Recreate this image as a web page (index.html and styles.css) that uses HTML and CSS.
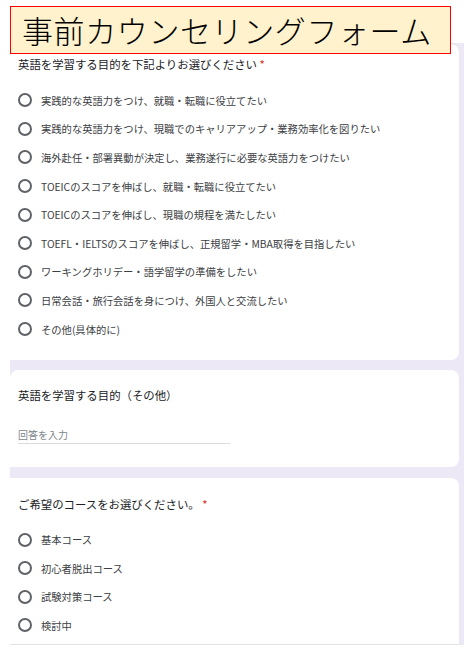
FILE: index.html
```html
<!DOCTYPE html>
<html lang="ja">
<head>
<meta charset="utf-8">
<title>事前カウンセリングフォーム</title>
<link rel="stylesheet" href="styles.css">
</head>
<body>
<div class="page">
  <h1 class="banner">事前カウンセリングフォーム</h1>
  <div class="bg">
    <section class="card card1">
      <div class="q">英語を学習する目的を下記よりお選びください <span class="req">*</span></div>
      <ul class="opts">
        <li><span class="radio"></span>実践的な英語力をつけ、就職・転職に役立てたい</li>
        <li><span class="radio"></span>実践的な英語力をつけ、現職でのキャリアアップ・業務効率化を図りたい</li>
        <li><span class="radio"></span>海外赴任・部署異動が決定し、業務遂行に必要な英語力をつけたい</li>
        <li><span class="radio"></span>TOEICのスコアを伸ばし、就職・転職に役立てたい</li>
        <li><span class="radio"></span>TOEICのスコアを伸ばし、現職の規程を満たしたい</li>
        <li><span class="radio"></span>TOEFL・IELTSのスコアを伸ばし、正規留学・MBA取得を目指したい</li>
        <li><span class="radio"></span>ワーキングホリデー・語学留学の準備をしたい</li>
        <li><span class="radio"></span>日常会話・旅行会話を身につけ、外国人と交流したい</li>
        <li><span class="radio"></span>その他(具体的に)</li>
      </ul>
    </section>
    <section class="card card2">
      <div class="q">英語を学習する目的（その他）</div>
      <div class="field">回答を入力</div>
    </section>
    <section class="card card3">
      <div class="q">ご希望のコースをお選びください。 <span class="req">*</span></div>
      <ul class="opts opts3">
        <li><span class="radio"></span>基本コース</li>
        <li><span class="radio"></span>初心者脱出コース</li>
        <li><span class="radio"></span>試験対策コース</li>
        <li><span class="radio"></span>検討中</li>
      </ul>
    </section>
  </div>
</div>
</body>
</html>
```

FILE: styles.css
```css
html, body {
  margin: 0;
  padding: 0;
  background: #ffffff;
}
body {
  font-family: "Noto Sans CJK JP", "Noto Sans", sans-serif;
  color: #202124;
}
.page {
  position: relative;
  padding: 43px 0 0 10px;
  height: 622px;
}
.banner {
  position: absolute;
  left: 10px;
  top: 6px;
  height: 46px;
  margin: 0;
  box-sizing: content-box;
  border: 1px solid #ff0000;
  background: #fff2cc;
  font-family: "Noto Sans CJK JP", sans-serif;
  font-weight: 200;
  font-size: 31px;
  line-height: 46px;
  letter-spacing: 0.6px;
  padding: 0 0 0 11px;
  width: 428px;
  color: #000;
  z-index: 2;
}
.bg {
  background: #ece8f6;
  width: 454px;
  height: 602px;
  display: flex;
  flex-direction: column;
  gap: 10px;
}
.card {
  background: #ffffff;
  width: 449px;
  box-sizing: border-box;
  border-radius: 0 8px 8px 0;
  padding-left: 8px;
}
.card1 {
  height: 318px;
  padding-top: 12px;
  border-top: 1px solid #dadce0;
}
.card2 {
  height: 97px;
  padding-top: 17px;
  border-radius: 8px 8px 8px 0;
}
.card3 {
  height: 167px;
  padding-top: 18px;
  margin-top: 1px;
  border-radius: 0 8px 0 0;
  border-bottom: 1px solid #e3e3e6;
}
.q {
  font-size: 11.4px;
  line-height: 16px;
  color: #202124;
}
.req {
  color: #d93025;
}
.opts {
  list-style: none;
  margin: 14px 0 0 0;
  padding: 0;
}
.opts3 {
  margin-top: 13px;
}
.opts li {
  height: 28.6px;
  display: flex;
  align-items: center;
  font-size: 10.3px;
  color: #3c4043;
}
.radio {
  width: 14px;
  height: 14px;
  box-sizing: border-box;
  border: 2px solid #5f6368;
  border-radius: 50%;
  margin-right: 9px;
  flex: none;
}
.field {
  margin-top: 25px;
  width: 212px;
  font-size: 10px;
  line-height: 14px;
  color: #80868b;
  padding-bottom: 1px;
  border-bottom: 1px solid #dadce0;
}
```
